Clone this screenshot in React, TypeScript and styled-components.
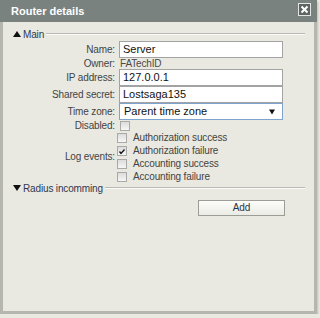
import styled, { createGlobalStyle } from "styled-components";

const GlobalStyle = createGlobalStyle`
  html, body {
    margin: 0;
    padding: 0;
    background: #e9e9e1;
  }
  body {
    font-family: "Liberation Sans", Arial, sans-serif;
  }
`;

const Dialog = styled.div`
  width: 317px;
  height: 314px;
  box-sizing: border-box;
  display: flex;
  flex-direction: column;
  border: 3px solid #b5b7af;
  border-top: none;
  background: #e9e9e1;
  box-shadow: 1px 2px 2px rgba(0, 0, 0, 0.18);
`;

const TitleBar = styled.div`
  height: 22px;
  margin: 0 -3px;
  padding: 0 6px 0 11px;
  display: flex;
  align-items: center;
  justify-content: space-between;
  background: #79827e;
  color: #fff;
  font-size: 11px;
  font-weight: bold;
`;

const CloseButton = styled.div`
  width: 13px;
  height: 13px;
  margin-top: -4px;
  box-sizing: border-box;
  border: 1px solid #e4e6e4;
  background: #5d6561;
  display: flex;
  align-items: center;
  justify-content: center;
`;

const Body = styled.div`
  flex: 1;
  padding: 7px 6px 0 10px;
  font-size: 10px;
  letter-spacing: -0.15px;
  color: #444;
`;

const SectionHeader = styled.div`
  display: flex;
  align-items: center;
  height: 10px;
  color: #2e3850;
`;

const Arrow = styled.svg`
  width: 8px;
  height: 6px;
  margin-right: 2px;
`;

const Rule = styled.div`
  flex: 1;
  margin-left: 2px;
  margin-right: 3px;
  border-top: 1px solid #b9bab3;
  border-bottom: 1px solid #fbfbf8;
`;

const Form = styled.div`
  display: grid;
  grid-template-columns: 102px 164px;
  column-gap: 4px;
  margin-top: 2px;
`;

const Label = styled.div<{ $h: number }>`
  height: ${(p) => p.$h}px;
  line-height: ${(p) => p.$h}px;
  text-align: right;
  white-space: nowrap;
  align-self: center;
`;

const Value = styled.div<{ $h: number }>`
  height: ${(p) => p.$h}px;
  display: flex;
  align-items: center;
`;

const TextInput = styled.div`
  width: 164px;
  height: 17px;
  box-sizing: border-box;
  border: 1px solid #a3a3a3;
  background: #fff;
  padding: 0 3px;
  font-size: 11px;
  letter-spacing: 0;
  line-height: 15px;
  color: #111;
`;

const Select = styled(TextInput)`
  display: flex;
  justify-content: space-between;
  align-items: center;
  border-color: #7fa3cf;
  padding: 0 7px 0 4px;
`;

const Plain = styled.div`
  padding-left: 1px;
  color: #4a4a4a;
`;

const CheckList = styled.div`
  display: flex;
  flex-direction: column;
  margin-left: -2px;
`;

const CheckItem = styled.div`
  height: 13px;
  display: flex;
  align-items: center;
  gap: 6px;
`;

const Box = styled.span<{ $left?: number }>`
  width: 10px;
  height: 10px;
  margin-left: ${(p) => p.$left ?? 0}px;
  box-sizing: border-box;
  border: 1px solid #a9aaa8;
  background: linear-gradient(#dcdcdc, #f6f6f6);
  display: flex;
  align-items: center;
  justify-content: center;
`;

const AddButton = styled.div`
  grid-column: 2;
  width: 87px;
  height: 16px;
  margin-left: 79px;
  margin-top: 5px;
  box-sizing: border-box;
  border: 1px solid #9d9d97;
  background: linear-gradient(#fdfdfb, #ebebe5);
  text-align: center;
  line-height: 14px;
  color: #2a3346;
`;

function Checkbox({ checked, left }: { checked?: boolean; left?: number }) {
  return (
    <Box $left={left}>
      {checked && (
        <svg width="8" height="8" viewBox="0 0 8 8">
          <path d="M1.5 4.5 L3 6.5 L6.5 2.5" stroke="#111" strokeWidth="1.3" fill="none" />
        </svg>
      )}
    </Box>
  );
}

const logEvents = [
  { label: "Authorization success", checked: false },
  { label: "Authorization failure", checked: true },
  { label: "Accounting success", checked: false },
  { label: "Accounting failure", checked: false },
];

export default function App() {
  return (
    <>
      <GlobalStyle />
      <Dialog>
        <TitleBar>
          <span>Router details</span>
          <CloseButton>
            <svg width="9" height="9" viewBox="0 0 9 9">
              <path d="M1.5 1.5 L7.5 7.5 M7.5 1.5 L1.5 7.5" stroke="#fff" strokeWidth="2" />
            </svg>
          </CloseButton>
        </TitleBar>
        <Body>
          <SectionHeader>
            <Arrow viewBox="0 0 8 6">
              <polygon points="0,6 8,6 4,0" fill="#111" />
            </Arrow>
            Main
            <Rule />
          </SectionHeader>
          <Form>
            <Label $h={17}>Name:</Label>
            <Value $h={17}>
              <TextInput>Server</TextInput>
            </Value>
            <Label $h={11}>Owner:</Label>
            <Value $h={11}>
              <Plain>FATechID</Plain>
            </Value>
            <Label $h={17}>IP address:</Label>
            <Value $h={17}>
              <TextInput>127.0.0.1</TextInput>
            </Value>
            <Label $h={17}>Shared secret:</Label>
            <Value $h={17}>
              <TextInput>Lostsaga135</TextInput>
            </Value>
            <Label $h={17}>Time zone:</Label>
            <Value $h={17}>
              <Select>
                <span>Parent time zone</span>
                <svg width="6" height="6" viewBox="0 0 6 6">
                  <polygon points="0,0.5 6,0.5 3,5.5" fill="#111" />
                </svg>
              </Select>
            </Value>
            <Label $h={11}>Disabled:</Label>
            <Value $h={11}>
              <Checkbox left={1} />
            </Value>
            <Label $h={12}>Log events:</Label>
            <CheckList>
              {logEvents.map((e) => (
                <CheckItem key={e.label}>
                  <Checkbox checked={e.checked} />
                  {e.label}
                </CheckItem>
              ))}
            </CheckList>
          </Form>
          <SectionHeader>
            <Arrow viewBox="0 0 8 6">
              <polygon points="0,0 8,0 4,6" fill="#111" />
            </Arrow>
            Radius incomming
            <Rule />
          </SectionHeader>
          <Form>
            <AddButton>Add</AddButton>
          </Form>
        </Body>
      </Dialog>
    </>
  );
}
